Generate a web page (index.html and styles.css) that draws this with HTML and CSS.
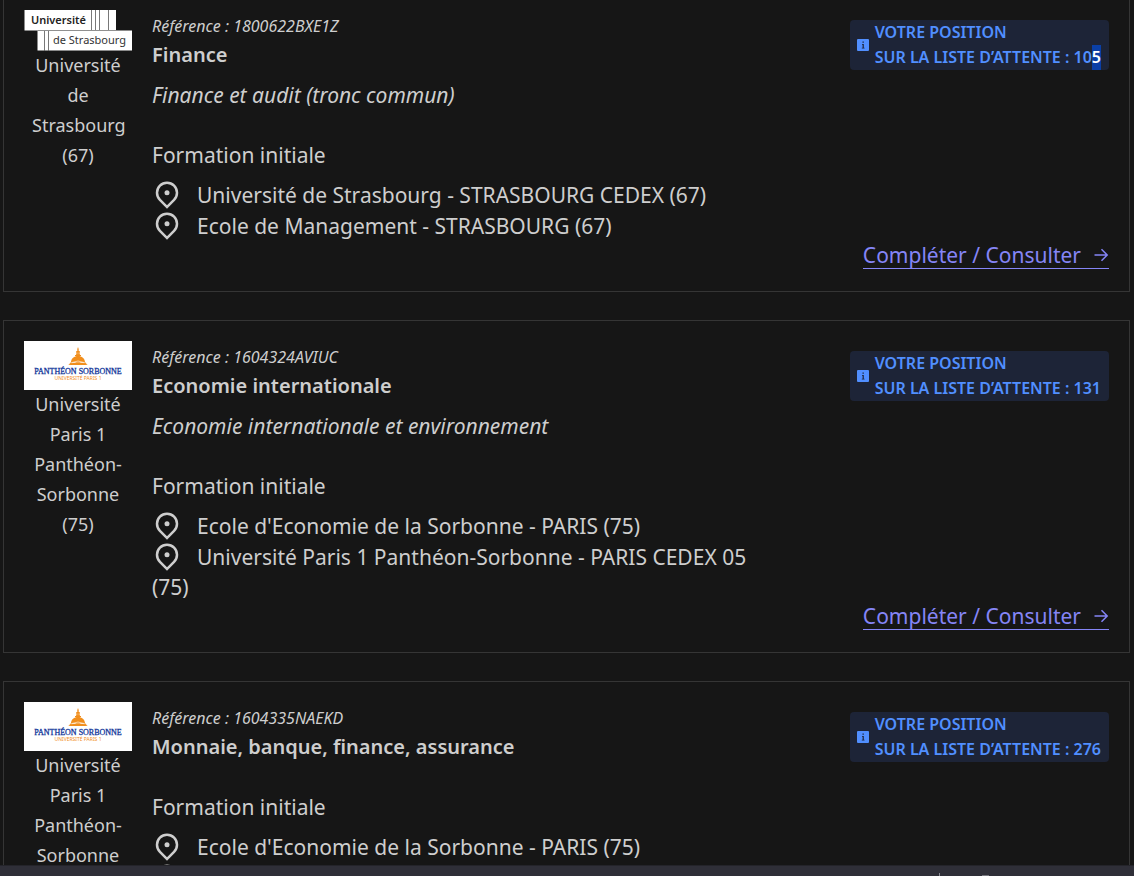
FILE: index.html
```html
<!DOCTYPE html>
<html lang="fr">
<head>
<meta charset="utf-8">
<title>Mes candidatures</title>
<link rel="stylesheet" href="styles.css">
</head>
<body>
<svg class="defs" aria-hidden="true">
  <symbol id="pin" viewBox="0 0 24 24"><path d="M12 20.9l4.95-4.95a7 7 0 1 0-9.9 0L12 20.9zm0 2.828l-6.364-6.364a9 9 0 1 1 12.728 0L12 23.728z"/><circle cx="12" cy="11" r="2"/></symbol>
  <symbol id="info" viewBox="0 0 12 12"><rect width="12" height="12" rx="1" fill="#518fff"/><path d="M5.500 2.500h1.300v1.300H5.500zM5 5h1.800v3.700h.7v.8H4.800v-.8h.8V5.800H5z" fill="#1d2437"/></symbol>
  <symbol id="arrow" viewBox="0 0 16 16"><path d="M1.500 8h12.500M8.500 2.300L14.200 8l-5.700 5.700" fill="none" stroke="currentColor" stroke-width="1.500"/></symbol>
  <symbol id="sorbonne" viewBox="0 0 108 49">
    <rect width="108" height="49" fill="#fff"/>
    <g fill="#f18e1c">
      <path d="M54 6l.7 2h-1.400zM53.300 8h1.400v2h-1.400zM52 10.500q2-1.500 4 0v3.500h-4zM51 14h6v1h-6zM47 21c.3-3.500 3-6 7-6s6.700 2.500 7 6zM46.500 21.500h15l1.500 2q-9-5-18 0zM44 24q10-5.500 20 0H44z"/>
    </g>
    <path d="M52.800 11.300v2M55.200 11.300v2M48 21.500q6-3 12 0" stroke="#fff" stroke-width=".6" fill="none"/>
    <text class="logo-serif" x="54" y="33" text-anchor="middle">PANTHÉON SORBONNE</text>
    <text class="logo-tiny" x="54" y="39" text-anchor="middle">UNIVERSITÉ PARIS 1</text>
  </symbol>
</svg>
<main class="list">
  <article class="card">
    <div class="school">
      <svg class="logo" viewBox="0 0 108 41" role="img" aria-label="Université de Strasbourg">
        <path d="M.5 0H92v20.500H.5zM13.500 20.500H108v20H13.500z" fill="#fff"/>
        <path d="M67.500 0v20M71.500 0v20M75.500 0v20M84.500 0v20M20.500 21v20M24.500 21v20" stroke="#555" stroke-width=".8"/>
        <path d="M13.500 20.500H92" stroke="#444" stroke-width=".6"/>
        <text class="logo-bold" x="7" y="14">Université</text>
        <text class="logo-thin" x="29" y="34">de Strasbourg</text>
      </svg>
      <p class="school-name">Université de Strasbourg (67)</p>
    </div>
    <div class="details">
      <p class="reference">Référence : 1800622BXE1Z</p>
      <h2 class="title">Finance</h2>
      <p class="track">Finance et audit (tronc commun)</p>
      <p class="mode">Formation initiale</p>
      <ul class="places">
        <li><svg class="pin"><use href="#pin"/></svg>Université de Strasbourg - STRASBOURG CEDEX (67)</li>
        <li><svg class="pin"><use href="#pin"/></svg>Ecole de Management - STRASBOURG (67)</li>
      </ul>
    </div>
    <p class="badge"><svg class="info"><use href="#info"/></svg><span>VOTRE POSITION<br>SUR LA LISTE D’ATTENTE : 10<span class="selected">5</span></span></p>
    <a class="open" href="#finance">Compléter / Consulter<svg class="arrow"><use href="#arrow"/></svg></a>
  </article>

  <article class="card">
    <div class="school">
      <svg class="logo" viewBox="0 0 108 49" role="img" aria-label="Panthéon Sorbonne"><use href="#sorbonne"/></svg>
      <p class="school-name">Université Paris 1 Panthéon-Sorbonne (75)</p>
    </div>
    <div class="details">
      <p class="reference">Référence : 1604324AVIUC</p>
      <h2 class="title">Economie internationale</h2>
      <p class="track">Economie internationale et environnement</p>
      <p class="mode">Formation initiale</p>
      <ul class="places">
        <li><svg class="pin"><use href="#pin"/></svg>Ecole d'Economie de la Sorbonne - PARIS (75)</li>
        <li><svg class="pin"><use href="#pin"/></svg>Université Paris 1 Panthéon-Sorbonne - PARIS CEDEX 05 (75)</li>
      </ul>
    </div>
    <p class="badge"><svg class="info"><use href="#info"/></svg><span>VOTRE POSITION<br>SUR LA LISTE D’ATTENTE : 131</span></p>
    <a class="open" href="#economie">Compléter / Consulter<svg class="arrow"><use href="#arrow"/></svg></a>
  </article>

  <article class="card">
    <div class="school">
      <svg class="logo" viewBox="0 0 108 49" role="img" aria-label="Panthéon Sorbonne"><use href="#sorbonne"/></svg>
      <p class="school-name">Université Paris 1 Panthéon-Sorbonne</p>
    </div>
    <div class="details">
      <p class="reference">Référence : 1604335NAEKD</p>
      <h2 class="title">Monnaie, banque, finance, assurance</h2>
      <p class="mode">Formation initiale</p>
      <ul class="places">
        <li><svg class="pin"><use href="#pin"/></svg>Ecole d'Economie de la Sorbonne - PARIS (75)</li>
        <li><svg class="pin"><use href="#pin"/></svg></li>
      </ul>
    </div>
    <p class="badge"><svg class="info"><use href="#info"/></svg><span>VOTRE POSITION<br>SUR LA LISTE D’ATTENTE : 276</span></p>
  </article>
</main>
<footer class="taskbar"><svg class="marks" viewBox="0 0 60 10"><path d="M4.500 7v3" stroke="#8a8a92"/><path d="M47 9.500h7" stroke="#77777f"/></svg></footer>
</body>
</html>
```

FILE: styles.css
```css
* { box-sizing: border-box; margin: 0; padding: 0; }

body {
  height: 100vh;
  display: flex;
  flex-direction: column;
  background: #161616;
  color: #cecece;
  font: 21px/30px "Noto Sans", sans-serif;
}

.defs { position: absolute; width: 0; height: 0; }

.list {
  flex: 1;
  min-height: 0;
  overflow: hidden;
  display: flex;
  flex-direction: column;
  gap: 28px;
  padding: 0 4px 0 3px;
}

/* The list is shown scrolled a little past its start. */
.card:first-child { margin-top: -11px; }

.card {
  flex: none;
  display: grid;
  grid-template-columns: 108px minmax(0, 600px) 1fr;
  grid-template-rows: auto auto;
  column-gap: 20px;
  padding: 20px;
  border: 1px solid #353535;
}

.school { grid-row: 1 / 3; text-align: center; font-size: 18px; }
.logo { display: block; width: 100%; }
.school-name { margin-top: -1px; padding: 0 8px; }

.reference { padding-top: 2px; font-size: 16px; line-height: 28px; font-style: italic; }
.title { font-size: 20px; line-height: 30px; font-weight: 600; }
.track { margin-top: 10px; font-style: italic; }
.mode { margin-top: 30px; }
.places { margin-top: 9px; list-style: none; }
.pin { width: 30px; height: 30px; margin-right: 15px; vertical-align: -6px; fill: currentColor; }

.badge {
  justify-self: end;
  align-self: start;
  display: flex;
  align-items: center;
  gap: 6px;
  margin-top: 10px;
  padding: 0 8px 0 7px;
  border-radius: 4px;
  background: #1d2437;
  color: #518fff;
  font-size: 16px;
  line-height: 25px;
  font-weight: 600;
  white-space: nowrap;
}
.info { width: 12px; height: 12px; }
.selected { display: inline-block; background: #0a3fa6; color: #fff; }

.open {
  grid-column: 3;
  justify-self: end;
  display: flex;
  align-items: center;
  gap: 12px;
  height: 28px;
  margin-bottom: 2px;
  border-bottom: 1px solid;
  color: #8585f6;
  text-decoration: none;
  white-space: nowrap;
}
.arrow { width: 16px; height: 16px; }

.taskbar {
  height: 11px;
  flex: none;
  border-top: 1px solid #24242a;
  background: #2f2f38;
  display: flex;
  justify-content: flex-end;
  padding-right: 139px;
}
.marks { width: 60px; height: 10px; }

.logo-bold { font: 600 11px "Noto Sans", sans-serif; fill: #222; }
.logo-thin { font: 400 11px "Noto Sans", sans-serif; fill: #333; }
.logo-serif { font: 400 8px "Liberation Serif", serif; fill: #14389a; stroke: #14389a; stroke-width: 0.3px; }
.logo-tiny { font: 400 5px "Noto Sans", sans-serif; fill: #f18e1c; }
```
